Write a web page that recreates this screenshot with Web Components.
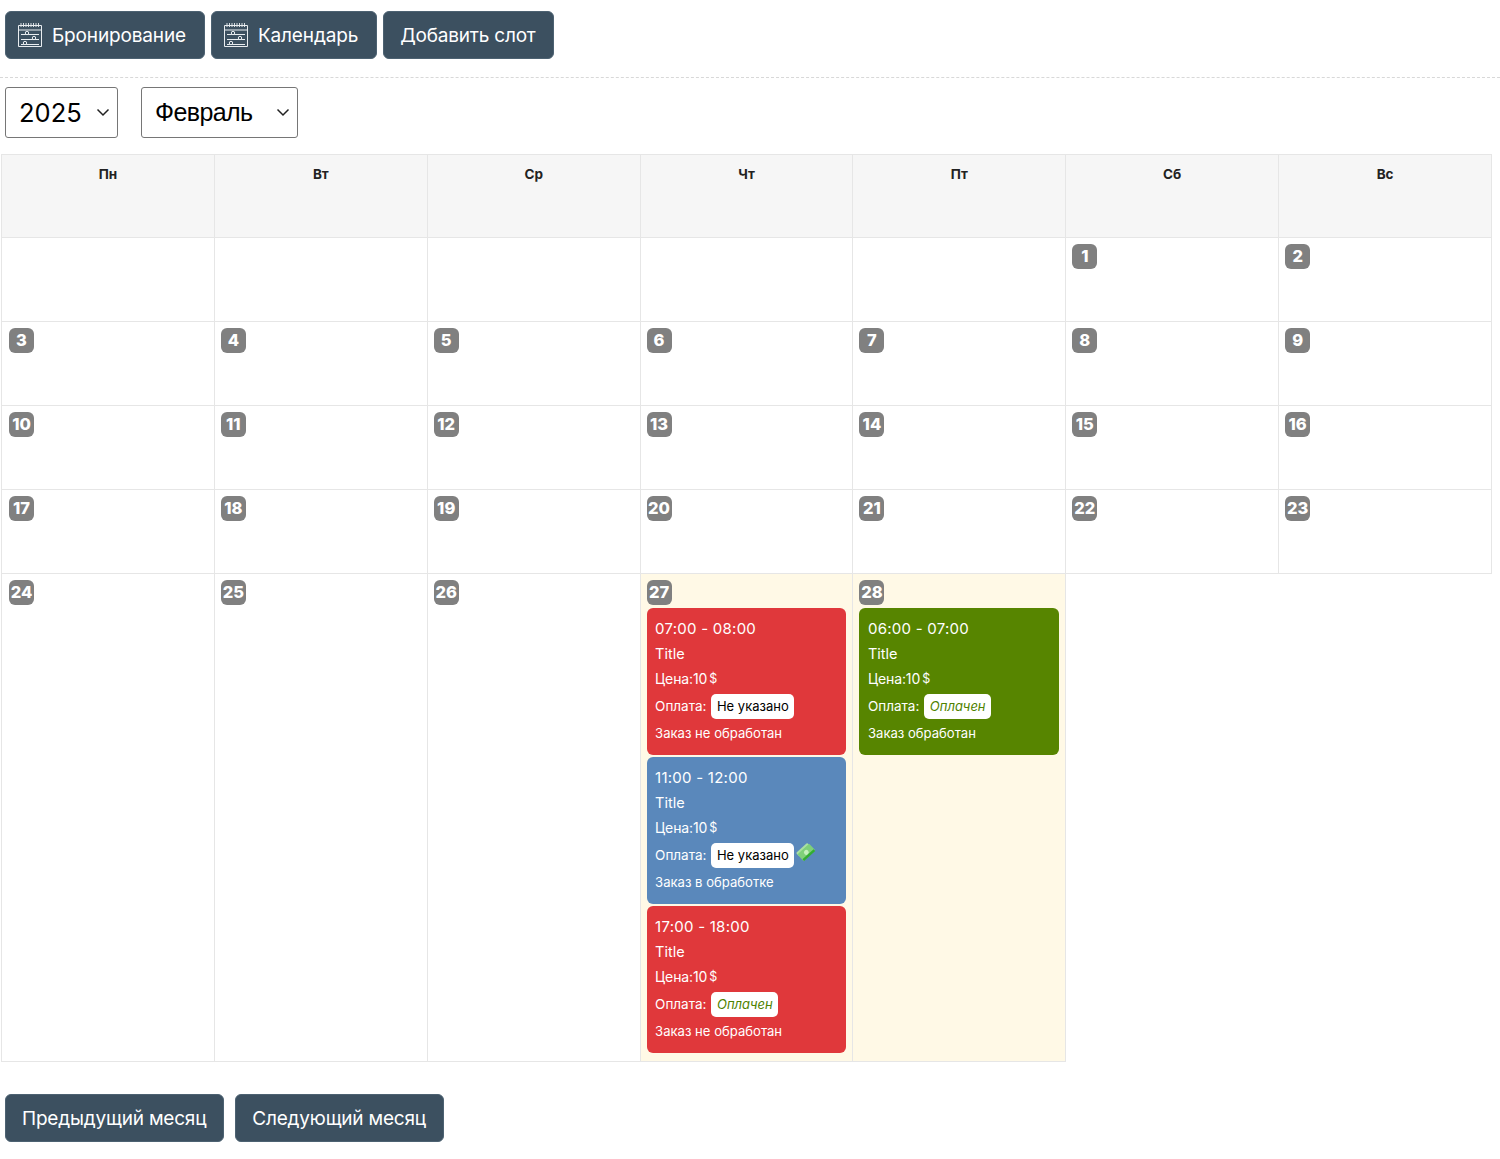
<!DOCTYPE html>
<html lang="ru"><head><meta charset="utf-8"><title>Календарь</title>
<style>
html,body{margin:0;background:#fff;font-family:Inter,"Liberation Sans",sans-serif}
</style></head><body>
<booking-page>
  <tool-bar>
    <app-button icon>Бронирование</app-button>
    <app-button icon>Календарь</app-button>
    <app-button>Добавить слот</app-button>
  </tool-bar>
  <month-picker></month-picker>
  <cal-grid></cal-grid>
  <page-nav>
    <app-button>Предыдущий месяц</app-button>
    <app-button>Следующий месяц</app-button>
  </page-nav>
</booking-page>
<script>
const def=(name,html,setup)=>customElements.define(name,class extends HTMLElement{
  constructor(){super();this.attachShadow({mode:'open'}).innerHTML=html;}
  connectedCallback(){setup&&setup.call(this);}
});
def('booking-page',`<style>:host{display:block;width:1500px;box-sizing:border-box;padding-top:11px}</style><slot></slot>`);
def('tool-bar',`<style>:host{display:flex;gap:6px;padding:0 0 18px 5px;height:48px;border-bottom:1px dashed #d8d8d8}</style><slot></slot>`);
def('page-nav',`<style>:host{display:flex;gap:11px;padding:32px 0 0 5px}</style><slot></slot>`);
const ICON=`<svg width="26" height="26" viewBox="0 0 26 26" fill="none" stroke="#e9edf0" stroke-width="1"><path d="M1.5 3.5H24.5V24.5H1.5Z"/><path d="M1.5 8H24.5"/><path d="M4 1V5M6.5 1V5M9 1V5M11.5 1V5M14 1V5M16.5 1V5M19 1V5M21.5 1V5" stroke-width=".9"/><path d="M4 12.5H22M4 17.5H22M4 22.5H22"/><circle cx="10" cy="11" r="1.7" fill="#3c5060"/><circle cx="17" cy="16" r="1.7" fill="#3c5060"/><circle cx="8" cy="21" r="1.7" fill="#3c5060"/></svg>`;
def('app-button',`<style>
:host{display:inline-flex;align-items:center;box-sizing:border-box;height:48px;padding:0 17px 0 16px;gap:9px;background:#3c5060;border:1px solid #4d6272;border-radius:6px;color:#fff;font:400 19px/1 Inter,"Liberation Sans",sans-serif;white-space:nowrap;letter-spacing:-.2px}
:host([icon]){padding-right:18px;letter-spacing:-.15px}
svg{display:block;flex:none;margin-left:-5px}
#i{display:contents}
</style><span id="i"></span><slot></slot>`,function(){if(this.hasAttribute('icon'))this.shadowRoot.getElementById('i').innerHTML=ICON;});
def('select-box',`<style>
:host{display:flex;align-items:center;justify-content:space-between;box-sizing:border-box;height:51px;padding:0 7px 0 13px;background:#fff;border:1px solid #767676;border-radius:3px;color:#000;font:400 25.5px/1 Inter,"Liberation Sans",sans-serif}
:host([text]){font:400 25px/1 "Liberation Sans",Arial,sans-serif;letter-spacing:-.6px}
svg{display:block}
</style><slot></slot><svg width="14" height="9" viewBox="0 0 14 9" fill="none" stroke="#222" stroke-width="1.5"><path d="M1.5 1.5L7 7L12.5 1.5"/></svg>`);
def('month-picker',`<style>:host{display:flex;gap:23.5px;padding:9px 0 16px 5px}
#y{width:112.5px}#m{width:157px}</style><select-box id="y">2025</select-box><select-box id="m" text>Февраль</select-box>`);
def('day-badge',`<style>:host{display:inline-flex;align-items:center;justify-content:center;box-sizing:border-box;min-width:25px;height:25px;padding:0 1px;background:#808080;border-radius:6px;color:#fff;font:800 16.5px/1 Inter,sans-serif}</style><slot></slot>`);
def('status-pill',`<style>:host{display:inline-flex;align-items:center;box-sizing:border-box;height:25px;padding:0 5.5px;background:#fff;border-radius:5px;color:#000;font:400 13px/1 Inter,sans-serif;white-space:nowrap}
:host([paid]){color:#4f8200;font-style:italic}</style><slot></slot>`);
def('event-card',`<style>
:host{display:block;box-sizing:border-box;height:147px;padding:0 0 0 8.5px;border-radius:6px;color:#fff;background:var(--bg);font:400 14px/1 Inter,sans-serif}
.r{display:flex;align-items:center;white-space:nowrap}
.t{height:40px;margin-bottom:-6px;font-size:15px;letter-spacing:.25px}
.n{height:24px;font-size:14.5px}
.p{height:26px;font-size:14px;letter-spacing:-.1px}
.o{height:30px;font-size:13.5px;gap:5px}
.s{height:24px;font-size:13.1px}
small{font-size:12.5px;margin-left:2px}
</style>
<div class="r t"><slot name="time"></slot></div><div class="r n">Title</div><div class="r p">Цена:10<small>$</small></div>
<div class="r o">Оплата: <slot name="pill"></slot></div><div class="r s"><slot name="state"></slot></div>`);
def('cal-cell',`<style>
:host{display:block;box-sizing:border-box;border-right:1px solid #e6e6e6;border-bottom:1px solid #e6e6e6;padding:6px 6px 0 6px;background:#fff}
:host([first]){padding-left:7px}
:host([head]){background:#f6f6f6;text-align:center;font:700 13.5px/1 Inter,"Liberation Sans",sans-serif;color:#222;padding:13px 0 0}
:host([today]){background:#fff9e6}
.e{display:flex;flex-direction:column;gap:2px;margin:3px 0 0}
</style><slot name="day"></slot><div class="e" id="e"><slot></slot></div>`,function(){if(this.hasAttribute('head'))this.shadowRoot.getElementById('e').style.display='contents';});
const MONEY=`<svg style="margin:-6px 0 0 -1px;display:block" width="22" height="22" viewBox="0 0 22 22"><g transform="rotate(-42 11 11)"><rect x="3" y="5" width="15" height="5" rx="1" fill="#a9e0a2"/><rect x="3" y="7" width="16" height="9" rx="1" fill="#7fd07a"/><circle cx="11" cy="11.5" r="2.4" fill="#c4f0bc"/><rect x="3.5" y="14" width="15" height="2.5" fill="#33ad33"/></g></svg>`;
const ev=(bg,time,pill,paid,state,money)=>`<event-card style="--bg:${bg}"><span slot="time">${time}</span><span slot="pill" style="display:inline-flex;align-items:center;gap:2px;margin-bottom:2px"><status-pill ${paid?'paid':''}>${pill}</status-pill>${money?MONEY:''}</span><span slot="state">${state}</span></event-card>`;
const RED='#e0383b',BLUE='#5a88bb',GREEN='#578500';
def('cal-grid',`<style>
:host{display:grid;grid-template-columns:repeat(7,212.86px);width:1490px;margin-left:1px;border-top:1px solid #e6e6e6;border-left:1px solid #e6e6e6;grid-template-rows:83px 84px 84px 84px 84px 488px}
</style><div id="g" style="display:contents"></div>`,function(){
  let h='';
  for(const d of ['Пн','Вт','Ср','Чт','Пт','Сб','Вс'])h+=`<cal-cell head>${d}</cal-cell>`;
  for(let i=0;i<5;i++)h+='<cal-cell></cal-cell>';
  const events={27:ev(RED,'07:00 - 08:00','Не указано',0,'Заказ не обработан')+ev(BLUE,'11:00 - 12:00','Не указано',0,'Заказ в обработке',1)+ev(RED,'17:00 - 18:00','Оплачен',1,'Заказ не обработан'),
    28:ev(GREEN,'06:00 - 07:00','Оплачен',1,'Заказ обработан')};
  for(let d=1;d<=28;d++){
    h+=`<cal-cell ${d>=27?'today':''} ${d%7==3?'first':''}><day-badge slot="day">${d}</day-badge>${events[d]||''}</cal-cell>`;
  }
  this.shadowRoot.getElementById('g').innerHTML=h;
});
</script>
</body></html>
